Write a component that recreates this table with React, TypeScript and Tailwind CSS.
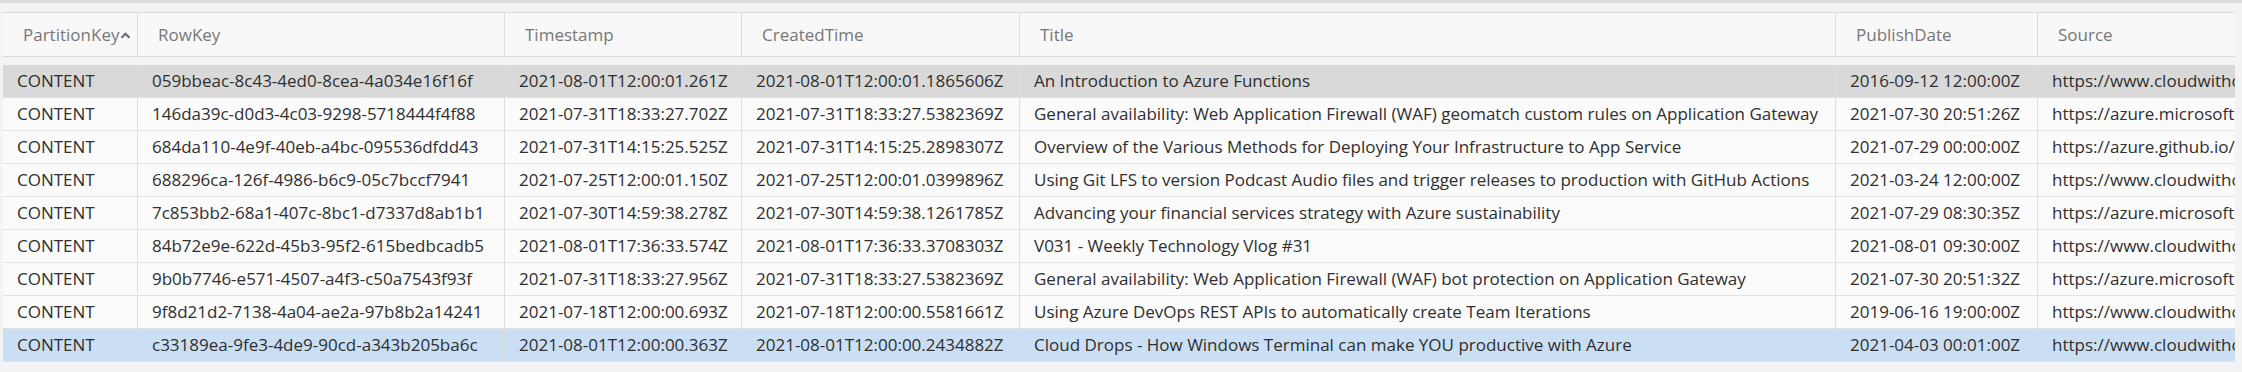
import React from "react";

interface Entity {
  partitionKey: string;
  rowKey: string;
  timestamp: string;
  createdTime: string;
  title: string;
  publishDate: string;
  source: string;
}

const rows: Entity[] = [
  {
    partitionKey: "CONTENT",
    rowKey: "059bbeac-8c43-4ed0-8cea-4a034e16f16f",
    timestamp: "2021-08-01T12:00:01.261Z",
    createdTime: "2021-08-01T12:00:01.1865606Z",
    title: "An Introduction to Azure Functions",
    publishDate: "2016-09-12 12:00:00Z",
    source: "https://www.cloudwithchris.com/blog/introduction-to-azure-functions/",
  },
  {
    partitionKey: "CONTENT",
    rowKey: "146da39c-d0d3-4c03-9298-5718444f4f88",
    timestamp: "2021-07-31T18:33:27.702Z",
    createdTime: "2021-07-31T18:33:27.5382369Z",
    title: "General availability: Web Application Firewall (WAF) geomatch custom rules on Application Gateway",
    publishDate: "2021-07-30 20:51:26Z",
    source: "https://azure.microsoft.com/updates/",
  },
  {
    partitionKey: "CONTENT",
    rowKey: "684da110-4e9f-40eb-a4bc-095536dfdd43",
    timestamp: "2021-07-31T14:15:25.525Z",
    createdTime: "2021-07-31T14:15:25.2898307Z",
    title: "Overview of the Various Methods for Deploying Your Infrastructure to App Service",
    publishDate: "2021-07-29 00:00:00Z",
    source: "https://azure.github.io/AppService/",
  },
  {
    partitionKey: "CONTENT",
    rowKey: "688296ca-126f-4986-b6c9-05c7bccf7941",
    timestamp: "2021-07-25T12:00:01.150Z",
    createdTime: "2021-07-25T12:00:01.0399896Z",
    title: "Using Git LFS to version Podcast Audio files and trigger releases to production with GitHub Actions",
    publishDate: "2021-03-24 12:00:00Z",
    source: "https://www.cloudwithchris.com/blog/",
  },
  {
    partitionKey: "CONTENT",
    rowKey: "7c853bb2-68a1-407c-8bc1-d7337d8ab1b1",
    timestamp: "2021-07-30T14:59:38.278Z",
    createdTime: "2021-07-30T14:59:38.1261785Z",
    title: "Advancing your financial services strategy with Azure sustainability",
    publishDate: "2021-07-29 08:30:35Z",
    source: "https://azure.microsoft.com/blog/",
  },
  {
    partitionKey: "CONTENT",
    rowKey: "84b72e9e-622d-45b3-95f2-615bedbcadb5",
    timestamp: "2021-08-01T17:36:33.574Z",
    createdTime: "2021-08-01T17:36:33.3708303Z",
    title: "V031 - Weekly Technology Vlog #31",
    publishDate: "2021-08-01 09:30:00Z",
    source: "https://www.cloudwithchris.com/episode/",
  },
  {
    partitionKey: "CONTENT",
    rowKey: "9b0b7746-e571-4507-a4f3-c50a7543f93f",
    timestamp: "2021-07-31T18:33:27.956Z",
    createdTime: "2021-07-31T18:33:27.5382369Z",
    title: "General availability: Web Application Firewall (WAF) bot protection on Application Gateway",
    publishDate: "2021-07-30 20:51:32Z",
    source: "https://azure.microsoft.com/updates/",
  },
  {
    partitionKey: "CONTENT",
    rowKey: "9f8d21d2-7138-4a04-ae2a-97b8b2a14241",
    timestamp: "2021-07-18T12:00:00.693Z",
    createdTime: "2021-07-18T12:00:00.5581661Z",
    title: "Using Azure DevOps REST APIs to automatically create Team Iterations",
    publishDate: "2019-06-16 19:00:00Z",
    source: "https://www.cloudwithchris.com/blog/",
  },
  {
    partitionKey: "CONTENT",
    rowKey: "c33189ea-9fe3-4de9-90cd-a343b205ba6c",
    timestamp: "2021-08-01T12:00:00.363Z",
    createdTime: "2021-08-01T12:00:00.2434882Z",
    title: "Cloud Drops - How Windows Terminal can make YOU productive with Azure",
    publishDate: "2021-04-03 00:01:00Z",
    source: "https://www.cloudwithchris.com/episode/",
  },
];

const columns = ["PartitionKey", "RowKey", "Timestamp", "CreatedTime", "Title", "PublishDate", "Source"];

const grid = "grid grid-cols-[134px_367px_237px_278px_816px_202px_420px]";

const SortArrow = () => (
  <svg width="11" height="7" viewBox="0 0 11 7" className="ml-[1px] mt-[1px] shrink-0">
    <path d="M1.5 5.8 L5.5 1.8 L9.5 5.8" fill="none" stroke="#6b6b6b" strokeWidth="2.2" />
  </svg>
);

const App: React.FC = () => {
  return (
    <div
      className="h-[372px] w-full overflow-hidden bg-[#f3f3f3] text-[17px] border-t-[3px] border-[#dedede]"
      style={{ fontFamily: '"Open Sans", "Noto Sans", sans-serif' }}
    >
      <div className="ml-[3px] mt-[9px] w-[2232px] overflow-hidden">
        {/* header */}
        <div className={`${grid} h-[45px] border-y border-[#d9d9d9] bg-[#f8f8f8] text-[#777777]`}>
          {columns.map((col, i) => (
            <div
              key={col}
              className={`flex items-center whitespace-nowrap overflow-hidden pl-[20px] ${
                i > 0 ? "border-l border-[#dcdcdc]" : ""
              }`}
            >
              <span>{col}</span>
              {i === 0 && <SortArrow />}
            </div>
          ))}
        </div>

        {/* rows */}
        <div className="mt-[8px]">
          {rows.map((row, idx) => {
            const bg = idx === 0 ? "bg-[#d9d9d9]" : idx === rows.length - 1 ? "bg-[#cbdff4]" : "bg-[#fbfbfb]";
            const cells = [
              row.partitionKey,
              row.rowKey,
              row.timestamp,
              row.createdTime,
              row.title,
              row.publishDate,
              row.source,
            ];
            return (
              <div key={row.rowKey} className={`${grid} h-[33px] border-b border-[#e2e2e2] text-[#2f2f2f] ${bg}`}>
                {cells.map((c, i) => (
                  <div
                    key={i}
                    className={`flex items-center whitespace-nowrap overflow-hidden pl-[14px] ${
                      i > 0 ? "border-l border-[#dedede]" : ""
                    }`}
                  >
                    {c}
                  </div>
                ))}
              </div>
            );
          })}
        </div>
      </div>
    </div>
  );
};

export default App;
